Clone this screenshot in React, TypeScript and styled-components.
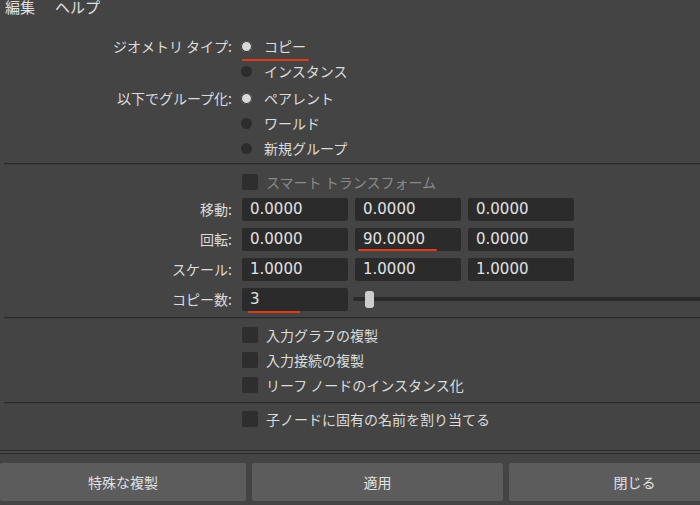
import React from 'react'
import styled, { createGlobalStyle } from 'styled-components'

const GlobalStyle = createGlobalStyle`
  html, body {
    margin: 0;
    padding: 0;
    background: #444444;
    overflow: hidden;
  }
  body {
    font-family: "Noto Sans CJK JP", "Noto Sans", sans-serif;
    color: #dcdcdc;
  }
`

const Window = styled.div`
  width: 760px;
  height: 505px;
  display: flex;
  flex-direction: column;
  background: #444444;
`

const MenuBar = styled.div`
  display: flex;
  gap: 20px;
  height: 18px;
  padding-left: 5px;
  margin-top: -2px;
  font-size: 15px;
  line-height: 18px;
  color: #e0e0e0;
`

const Form = styled.div`
  flex: 1;
  display: flex;
  flex-direction: column;
  padding-top: 17px;
`

const Group = styled.div<{ $gap?: number }>`
  display: flex;
  flex-direction: column;
  margin-bottom: ${p => p.$gap ?? 0}px;
`

const Row = styled.div<{ $h: number }>`
  display: grid;
  grid-template-columns: 232px 1fr;
  column-gap: 10px;
  align-items: center;
  height: ${p => p.$h}px;
`

const Label = styled.span`
  text-align: right;
  font-size: 14px;
  white-space: nowrap;
`

const Content = styled.div`
  display: flex;
  align-items: center;
  gap: 7px;
  min-width: 0;
`

const Option = styled.span<{ $marked?: boolean }>`
  position: relative;
  display: inline-flex;
  align-items: center;
  gap: 12px;
  font-size: 14px;
  margin-left: -1px;
  &::after {
    content: '';
    display: ${p => (p.$marked ? 'block' : 'none')};
    position: absolute;
    left: 1px;
    right: -3px;
    bottom: -5px;
    height: 2px;
    border-radius: 1px;
    background: #e23a1c;
  }
`

const Radio = styled.span<{ $on?: boolean }>`
  width: 11px;
  height: 11px;
  margin-top: 2px;
  border-radius: 50%;
  background: ${p => (p.$on ? '#d8d8d8' : '#2c2c2c')};
  box-shadow: ${p => (p.$on ? 'inset 0 0 0 1px #3a3a3a' : 'none')};
  flex: none;
`

const Check = styled.label<{ $disabled?: boolean }>`
  display: inline-flex;
  align-items: center;
  gap: 8px;
  font-size: 14px;
  color: ${p => (p.$disabled ? '#8a8a8a' : '#dcdcdc')};
`

const Box = styled.span`
  width: 16px;
  height: 16px;
  border-radius: 2px;
  background: #2e2e2e;
  flex: none;
`

const Field = styled.div`
  position: relative;
  width: 106px;
  height: 23px;
  box-sizing: border-box;
  padding-left: 8px;
  background: #2b2b2b;
  border-radius: 2px;
  font-family: "DejaVu Sans", "Liberation Sans", sans-serif;
  font-size: 15px;
  line-height: 23px;
  color: #e2e2e2;
  flex: none;
`

const Underline = styled.span<{ $left: number; $width: number; $bottom: number }>`
  position: absolute;
  left: ${p => p.$left}px;
  width: ${p => p.$width}px;
  bottom: ${p => p.$bottom}px;
  height: 2px;
  border-radius: 1px;
  background: #e23a1c;
`

const Slider = styled.div`
  flex: 1;
  display: flex;
  align-items: center;
  height: 23px;
  margin-left: -2px;
`

const Track = styled.div`
  flex: 1;
  height: 4px;
  border-radius: 2px 0 0 2px;
  background: #2b2b2b;
  display: flex;
  align-items: center;
  padding-left: 12px;
`

const Thumb = styled.span`
  width: 9px;
  height: 17px;
  border-radius: 3px;
  background: #cdcdcd;
`

const Separator = styled.div<{ $top: number; $bottom: number }>`
  margin: ${p => p.$top}px 0 ${p => p.$bottom}px 4px;
  height: 1px;
  background: #2a2a2a;
  border-bottom: 1px solid #3d3d3d;
`

const Footer = styled.div`
  height: 55px;
  display: flex;
  flex-direction: column;
`

const DoubleLine = styled.div`
  height: 2px;
  border-top: 1px solid #2a2a2a;
  border-bottom: 1px solid #2a2a2a;
  background: #4a4a4a;
`

const ButtonBar = styled.div`
  display: grid;
  grid-template-columns: 246px 251px 251px;
  column-gap: 6px;
  padding-top: 9px;
`

const Button = styled.button`
  height: 38px;
  border: none;
  border-radius: 2px;
  background: #5c5c5c;
  color: #e2e2e2;
  font-family: "Noto Sans CJK JP", "Noto Sans", sans-serif;
  font-size: 14px;
  padding: 0;
`

export default function App() {
  return (
    <Window>
      <GlobalStyle />
      <MenuBar>
        <span>編集</span>
        <span>ヘルプ</span>
      </MenuBar>
      <Form>
        <Group $gap={2}>
          <Row $h={25}>
            <Label>ジオメトリ タイプ:</Label>
            <Content>
              <Option $marked>
                <Radio $on />
                コピー
              </Option>
            </Content>
          </Row>
          <Row $h={25}>
            <span />
            <Content>
              <Option>
                <Radio />
                インスタンス
              </Option>
            </Content>
          </Row>
        </Group>
        <Group>
          <Row $h={25}>
            <Label>以下でグループ化:</Label>
            <Content>
              <Option>
                <Radio $on />
                ペアレント
              </Option>
            </Content>
          </Row>
          <Row $h={25}>
            <span />
            <Content>
              <Option>
                <Radio />
                ワールド
              </Option>
            </Content>
          </Row>
          <Row $h={25}>
            <span />
            <Content>
              <Option>
                <Radio />
                新規グループ
              </Option>
            </Content>
          </Row>
        </Group>
        <Separator $top={3} $bottom={5} />
        <Row $h={24}>
          <span />
          <Content>
            <Check $disabled>
              <Box />
              スマート トランスフォーム
            </Check>
          </Content>
        </Row>
        <Row $h={30}>
          <Label>移動:</Label>
          <Content>
            <Field>0.0000</Field>
            <Field>0.0000</Field>
            <Field>0.0000</Field>
          </Content>
        </Row>
        <Row $h={30}>
          <Label>回転:</Label>
          <Content>
            <Field>0.0000</Field>
            <Field>
              90.0000
              <Underline $left={3} $width={79} $bottom={0} />
            </Field>
            <Field>0.0000</Field>
          </Content>
        </Row>
        <Row $h={30}>
          <Label>スケール:</Label>
          <Content>
            <Field>1.0000</Field>
            <Field>1.0000</Field>
            <Field>1.0000</Field>
          </Content>
        </Row>
        <Row $h={30}>
          <Label>コピー数:</Label>
          <Content>
            <Field>
              3
              <Underline $left={6} $width={52} $bottom={-2} />
            </Field>
            <Slider>
              <Track>
                <Thumb />
              </Track>
            </Slider>
          </Content>
        </Row>
        <Separator $top={3} $bottom={3} />
        <Row $h={25}>
          <span />
          <Content>
            <Check>
              <Box />
              入力グラフの複製
            </Check>
          </Content>
        </Row>
        <Row $h={25}>
          <span />
          <Content>
            <Check>
              <Box />
              入力接続の複製
            </Check>
          </Content>
        </Row>
        <Row $h={26}>
          <span />
          <Content>
            <Check>
              <Box />
              リーフ ノードのインスタンス化
            </Check>
          </Content>
        </Row>
        <Separator $top={4} $bottom={2} />
        <Row $h={25}>
          <span />
          <Content>
            <Check>
              <Box />
              子ノードに固有の名前を割り当てる
            </Check>
          </Content>
        </Row>
      </Form>
      <Footer>
        <DoubleLine />
        <ButtonBar>
          <Button>特殊な複製</Button>
          <Button>適用</Button>
          <Button>閉じる</Button>
        </ButtonBar>
      </Footer>
    </Window>
  )
}
